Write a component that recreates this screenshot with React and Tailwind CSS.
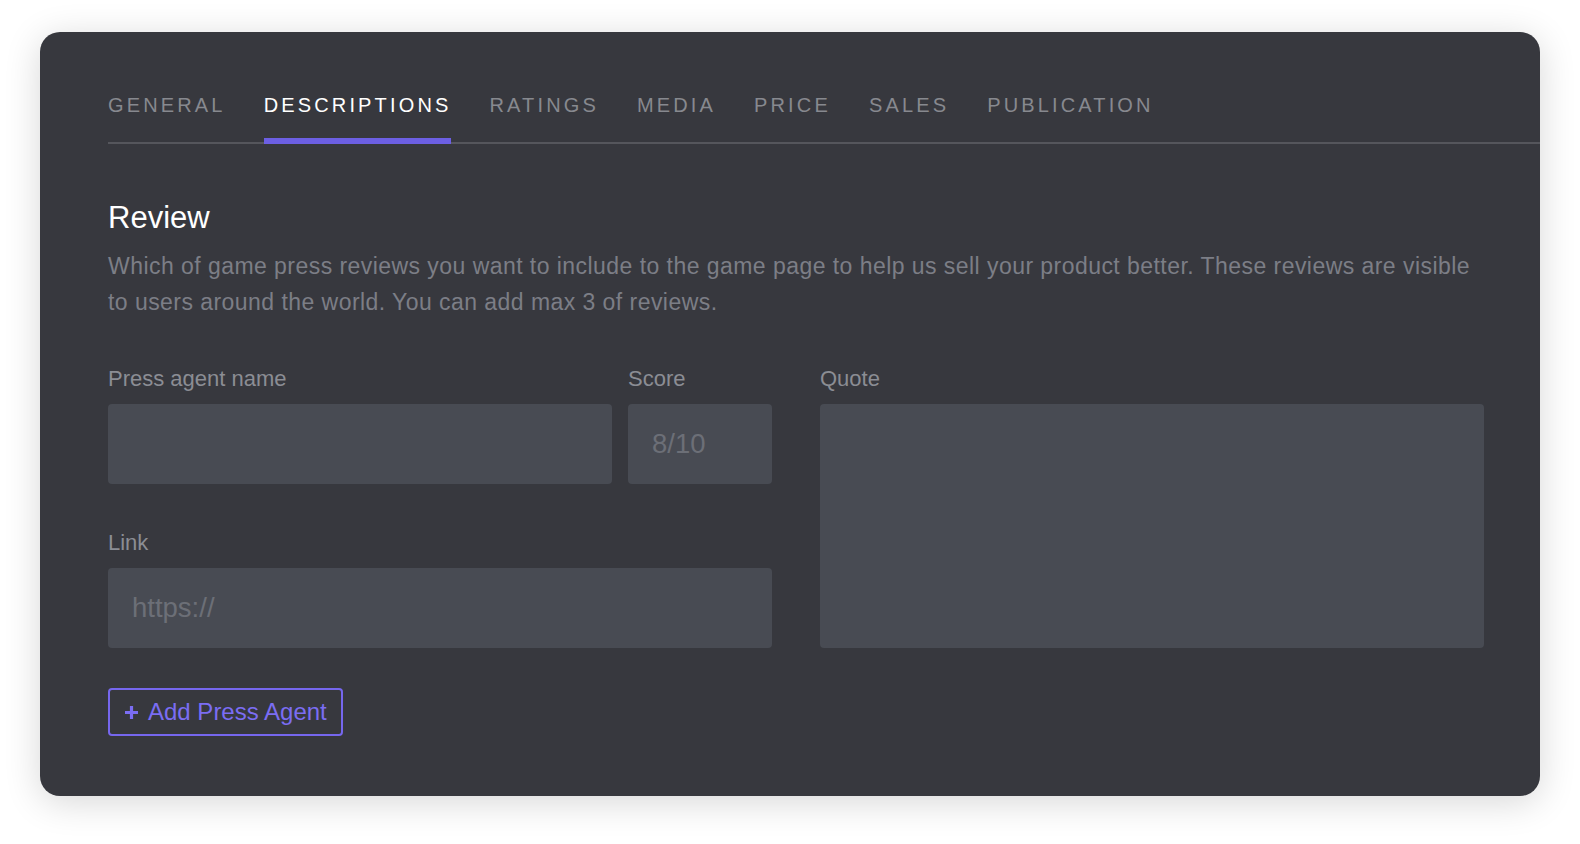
import React from "react";

const tabs = ["GENERAL", "DESCRIPTIONS", "RATINGS", "MEDIA", "PRICE", "SALES", "PUBLICATION"];

export default function App() {
  return (
    <div
      className="w-[1580px] h-[844px] bg-white pt-8 pl-10"
      style={{ fontFamily: '"Liberation Sans", Arial, sans-serif' }}
    >
      <div className="w-[1500px] h-[764px] rounded-[20px] bg-[#37383e] shadow-[0_6px_36px_rgba(0,0,0,0.16)] pt-[58px] flex flex-col">
        {/* Tabs */}
        <div className="ml-[68px] flex gap-[38px] border-b-2 border-[#55565c]">
          {tabs.map((t) => {
            const active = t === "DESCRIPTIONS";
            return (
              <div
                key={t}
                className={
                  active
                    ? "relative pb-[22px] text-[20px] leading-[30px] tracking-[3.15px] text-white"
                    : "relative pb-[22px] text-[20px] leading-[30px] tracking-[3.15px] text-[#87898f]"
                }
              >
                {t}
                {active && (
                  <div className="absolute left-0 right-0 bottom-[-2px] h-[6px] bg-[#6c5fe3]" />
                )}
              </div>
            );
          })}
        </div>

        {/* Content */}
        <div className="ml-[68px] w-[1376px] pt-[55px]">
          <h2 className="text-[31px] leading-[37px] text-white">Review</h2>
          <p className="mt-[13px] text-[23px] leading-[35.5px] tracking-[0.45px] text-[#7c7e86] whitespace-nowrap">
            Which of game press reviews you want to include to the game page to help us sell your product better. These reviews are visible
            <br />
            to users around the world. You can add max 3 of reviews.
          </p>

          <div className="mt-[46px] grid grid-cols-2 gap-x-12">
            <div className="flex flex-col">
              <div className="flex gap-4">
                <div className="flex-1 flex flex-col">
                  <label className="text-[22px] leading-[26px] text-[#8b8d94] mb-3">Press agent name</label>
                  <div className="h-20 rounded bg-[#484b53]" />
                </div>
                <div className="w-[144px] flex flex-col">
                  <label className="text-[22px] leading-[26px] text-[#8b8d94] mb-3">Score</label>
                  <div className="h-20 rounded bg-[#484b53] px-6 flex items-center text-[27.5px] text-[#6c6f77]">
                    8/10
                  </div>
                </div>
              </div>
              <div className="mt-[46px] flex flex-col">
                <label className="text-[22px] leading-[26px] text-[#8b8d94] mb-3">Link</label>
                <div className="h-20 rounded bg-[#484b53] px-6 flex items-center text-[27.5px] text-[#6c6f77]">
                  https://
                </div>
              </div>
            </div>
            <div className="flex flex-col">
              <label className="text-[22px] leading-[26px] text-[#8b8d94] mb-3">Quote</label>
              <div className="flex-1 rounded bg-[#484b53]" />
            </div>
          </div>

          <button className="mt-10 h-12 pl-[14px] pr-[14px] border-2 border-[#7667ee] rounded-[4px] flex items-center gap-[9px] text-[24px] text-[#7b6df3]">
            <svg width="15" height="15" viewBox="0 0 15 15">
              <path d="M7.5 1v13M1 7.5h13" stroke="#7b6df3" strokeWidth="3.2" strokeLinecap="butt" />
            </svg>
            <span>Add Press Agent</span>
          </button>
        </div>
      </div>
    </div>
  );
}
